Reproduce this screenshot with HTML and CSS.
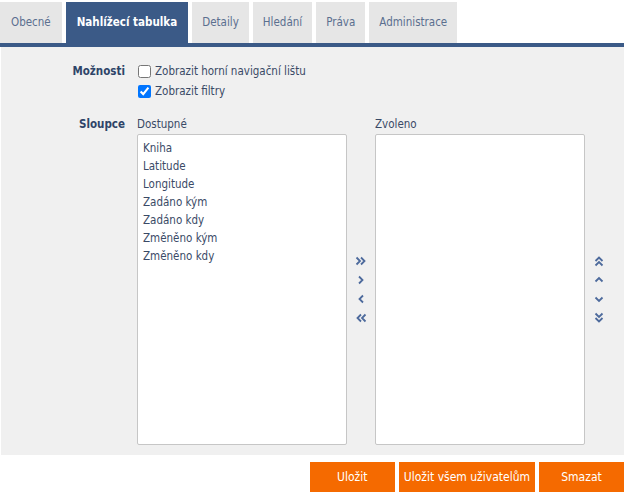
FILE: index.html
```html
<!DOCTYPE html>
<html lang="cs">
<head>
<meta charset="utf-8">
<title>Nahlížecí tabulka</title>
<link rel="stylesheet" href="styles.css">
</head>
<body>
<div class="tabbar">
  <div class="tab wide">Obecné</div>
  <div class="tab wide active">Nahlížecí tabulka</div>
  <div class="tab">Detaily</div>
  <div class="tab">Hledání</div>
  <div class="tab">Práva</div>
  <div class="tab">Administrace</div>
</div>
<div class="panel">
  <div class="row options">
    <div class="label">Možnosti</div>
    <div class="field">
      <label class="check"><input type="checkbox"> Zobrazit horní navigační lištu</label>
      <label class="check"><input type="checkbox" checked> Zobrazit filtry</label>
    </div>
  </div>
  <div class="row columns">
    <div class="label">Sloupce</div>
    <div class="picker">
      <div class="listcol">
        <div class="caption">Dostupné</div>
        <div class="listbox">
          <div class="item">Kniha</div>
          <div class="item">Latitude</div>
          <div class="item">Longitude</div>
          <div class="item">Zadáno kým</div>
          <div class="item">Zadáno kdy</div>
          <div class="item">Změněno kým</div>
          <div class="item">Změněno kdy</div>
        </div>
      </div>
      <div class="arrows">
        <svg viewBox="0 0 12 12"><polyline points="1.5,2.5 5,6 1.5,9.5"/><polyline points="6,2.5 9.5,6 6,9.5"/></svg>
        <svg viewBox="0 0 12 12"><polyline points="4,2.5 7.5,6 4,9.5"/></svg>
        <svg viewBox="0 0 12 12"><polyline points="8,2.5 4.5,6 8,9.5"/></svg>
        <svg viewBox="0 0 12 12"><polyline points="6,2.5 2.5,6 6,9.5"/><polyline points="10.5,2.5 7,6 10.5,9.5"/></svg>
      </div>
      <div class="listcol">
        <div class="caption">Zvoleno</div>
        <div class="listbox"></div>
      </div>
      <div class="arrows right">
        <svg viewBox="0 0 12 12"><polyline points="2.5,6 6,2.5 9.5,6"/><polyline points="2.5,10.5 6,7 9.5,10.5"/></svg>
        <svg viewBox="0 0 12 12"><polyline points="2.5,7.5 6,4 9.5,7.5"/></svg>
        <svg viewBox="0 0 12 12"><polyline points="2.5,4.5 6,8 9.5,4.5"/></svg>
        <svg viewBox="0 0 12 12"><polyline points="2.5,1.5 6,5 9.5,1.5"/><polyline points="2.5,6 6,9.5 9.5,6"/></svg>
      </div>
    </div>
  </div>
</div>
<div class="buttons">
  <button class="btn w85">Uložit</button>
  <button class="btn">Uložit všem uživatelům</button>
  <button class="btn w85">Smazat</button>
</div>
</body>
</html>
```
FILE: styles.css
```css
html, body {
  margin: 0;
  padding: 0;
  background: #ffffff;
}
body {
  width: 626px;
  font-family: "DejaVu Sans Condensed", "DejaVu Sans", sans-serif;
  font-size: 11.5px;
  color: #3a4a66;
}
.tabbar {
  display: flex;
  gap: 4px;
  padding-top: 2px;
  border-bottom: 4px solid #3b5a87;
  margin-right: 2px;
}
.tab {
  height: 41px;
  line-height: 41px;
  padding: 0 10px;
  background: #e6e6e6;
  color: #5b6f8f;
}
.tab.wide {
  padding: 0 11px;
}
.tab.active {
  background: #3b5a87;
  color: #ffffff;
  font-weight: bold;
}
.panel {
  background: #f0f0f0;
  margin: 0 2px 0 1px;
  height: 408px;
  padding-top: 14px;
  box-sizing: border-box;
}
.row {
  display: flex;
}
.label {
  text-align: right;
  font-weight: bold;
  color: #2e4468;
  padding-right: 12px;
  box-sizing: border-box;
  width: 136px;
}
.options .label {
  line-height: 20px;
}
.field {
  display: flex;
  flex-direction: column;
}
.check {
  display: flex;
  align-items: center;
  height: 20px;
}
.check input {
  margin: 0 4px 0 1px;
  width: 13px;
  height: 13px;
}
.columns {
  margin-top: 15px;
}
.columns .label {
  line-height: 16px;
}
.picker {
  display: flex;
}
.listcol {
  display: flex;
  flex-direction: column;
}
.caption {
  height: 16px;
  line-height: 16px;
  margin-bottom: 2px;
}
.listbox {
  width: 210px;
  height: 311px;
  box-sizing: border-box;
  background: #ffffff;
  border: 1px solid #c6c6c6;
  border-radius: 2px;
  padding: 4px 5px;
}
.item {
  height: 18px;
  line-height: 18px;
}
.arrows {
  width: 28px;
  display: flex;
  flex-direction: column;
  align-items: center;
  justify-content: center;
  gap: 7px;
  padding-top: 18px;
}
.arrows.right {
  width: 27px;
}
.arrows svg {
  width: 12px;
  height: 12px;
  fill: none;
  stroke: #4d6a9c;
  stroke-width: 1.8;
}
.buttons {
  display: flex;
  justify-content: flex-end;
  gap: 4px;
  padding: 7px 2px 0 0;
}
.btn {
  height: 30px;
  padding: 0 5px;
  border: none;
  background: #f56a00;
  color: #ffffff;
  font-family: inherit;
  font-size: 12px;
}
.w85 {
  width: 85px;
}
```
